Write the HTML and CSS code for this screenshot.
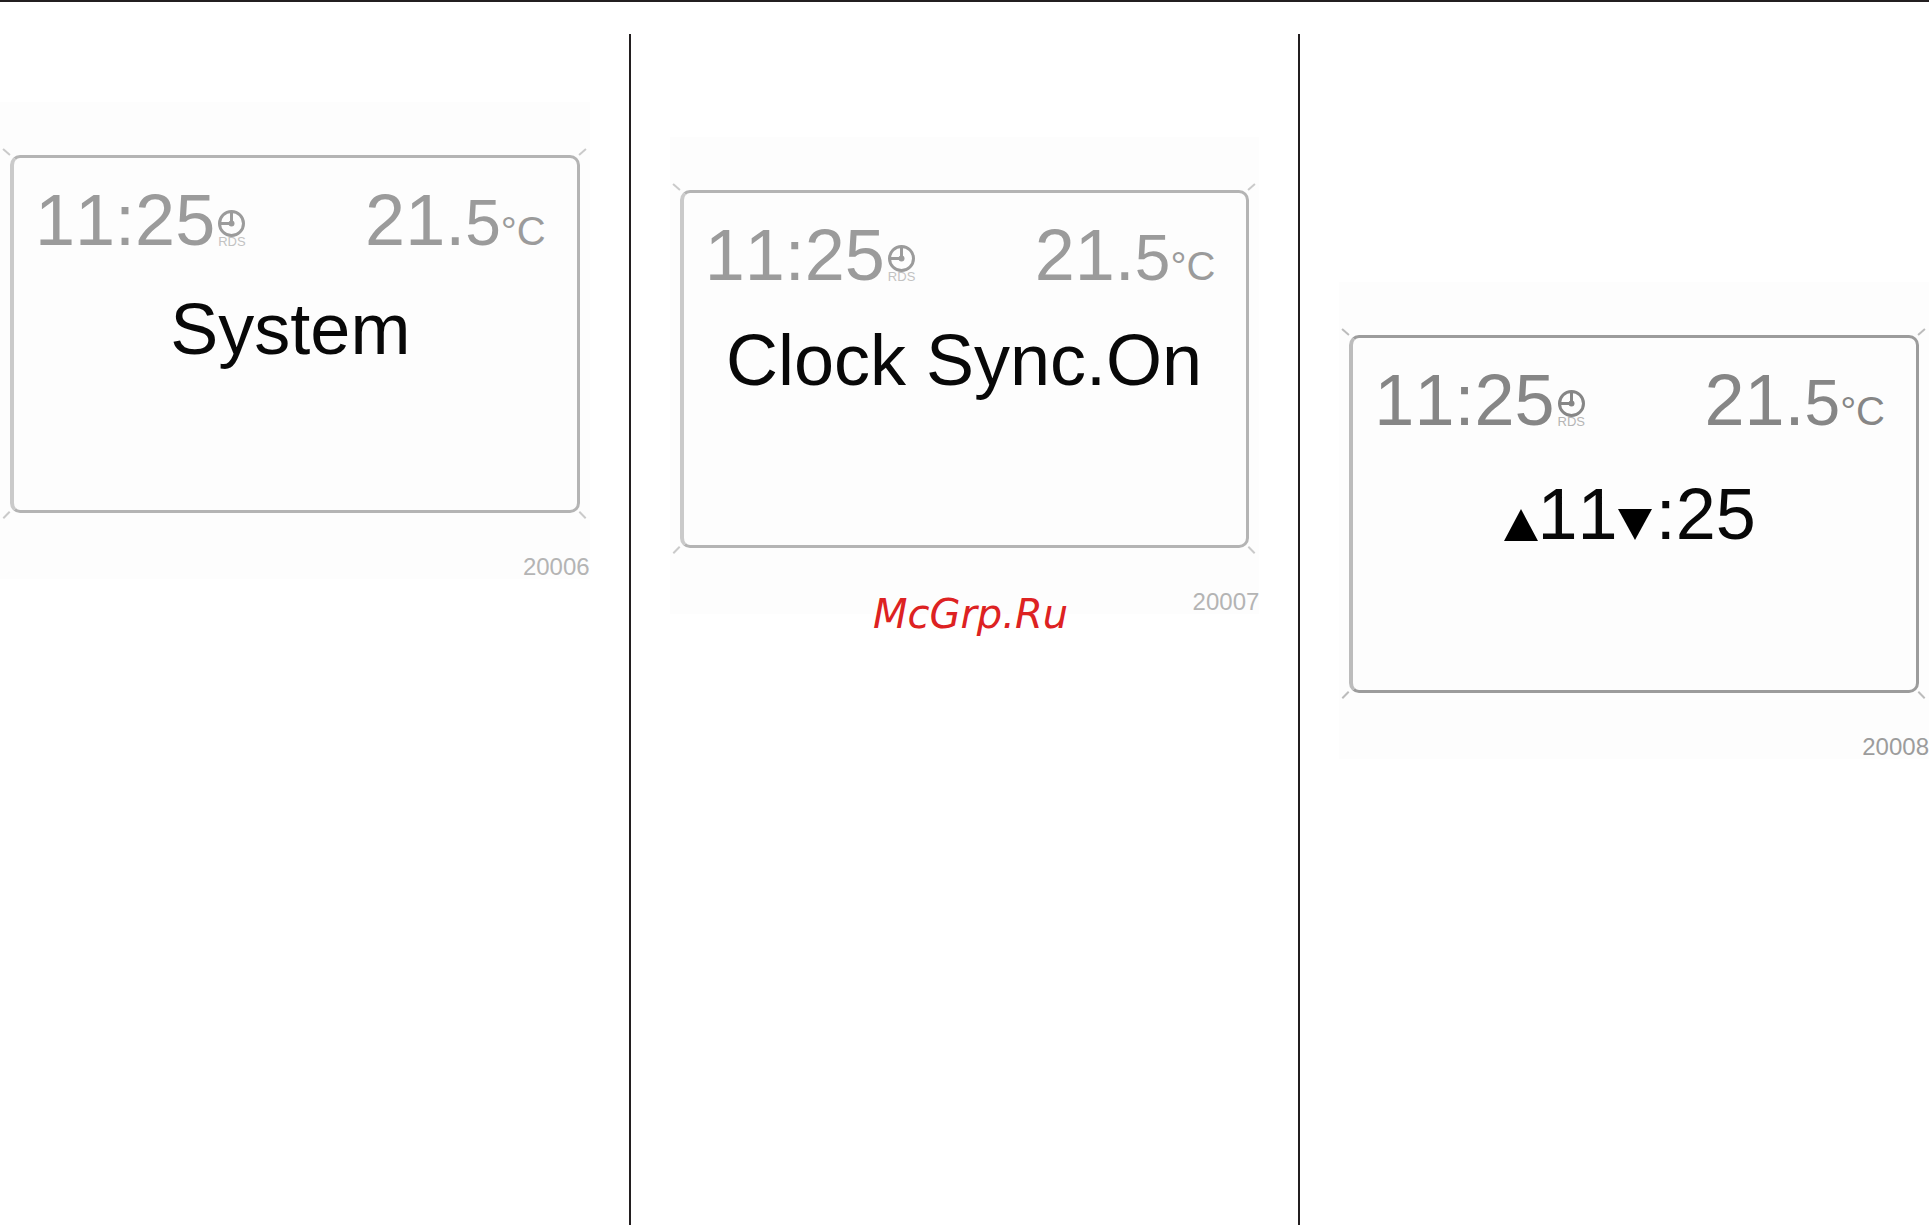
FILE: index.html
```html
<!DOCTYPE html>
<html lang="en">
<head>
    <meta charset="UTF-8">
    <meta name="viewport" content="width=device-width, initial-scale=1.0">
    <title>System - Clock Sync</title>
    <link rel="stylesheet" href="styles.css">
</head>
<body>
    <main class="page">
        <section class="column">
            <figure class="figure figure-system">
                <div class="display">
                    <span class="tick top-left"></span>
                    <span class="tick top-right"></span>
                    <span class="tick bottom-left"></span>
                    <span class="tick bottom-right"></span>
                    <div class="status">
                        <span class="time">11:25</span>
                        <span class="rds">
                            <svg class="clock" viewBox="0 0 27 27">
                                <circle cx="13.5" cy="13.5" r="12" />
                                <path d="M13.5 3v10.5H3" />
                                <circle class="hub" cx="13.5" cy="13.5" r="3" />
                            </svg>
                            <span>RDS</span>
                        </span>
                        <span class="temperature">21.<span class="decimal">5</span><span class="unit">°C</span></span>
                    </div>
                    <p class="message">System</p>
                </div>
                <figcaption>20006</figcaption>
            </figure>
        </section>

        <section class="column">
            <figure class="figure figure-sync">
                <div class="display">
                    <span class="tick top-left"></span>
                    <span class="tick top-right"></span>
                    <span class="tick bottom-left"></span>
                    <span class="tick bottom-right"></span>
                    <div class="status">
                        <span class="time">11:25</span>
                        <span class="rds">
                            <svg class="clock" viewBox="0 0 27 27">
                                <circle cx="13.5" cy="13.5" r="12" />
                                <path d="M13.5 3v10.5H3" />
                                <circle class="hub" cx="13.5" cy="13.5" r="3" />
                            </svg>
                            <span>RDS</span>
                        </span>
                        <span class="temperature">21.<span class="decimal">5</span><span class="unit">°C</span></span>
                    </div>
                    <p class="message">Clock Sync.On</p>
                </div>
                <figcaption>20007</figcaption>
                <div class="watermark">McGrp.Ru</div>
            </figure>
        </section>

        <section class="column">
            <figure class="figure figure-time">
                <div class="display">
                    <span class="tick top-left"></span>
                    <span class="tick top-right"></span>
                    <span class="tick bottom-left"></span>
                    <span class="tick bottom-right"></span>
                    <div class="status">
                        <span class="time">11:25</span>
                        <span class="rds">
                            <svg class="clock" viewBox="0 0 27 27">
                                <circle cx="13.5" cy="13.5" r="12" />
                                <path d="M13.5 3v10.5H3" />
                                <circle class="hub" cx="13.5" cy="13.5" r="3" />
                            </svg>
                            <span>RDS</span>
                        </span>
                        <span class="temperature">21.<span class="decimal">5</span><span class="unit">°C</span></span>
                    </div>
                    <p class="message">
                        <svg class="arrow" viewBox="0 0 34 32"><path d="M17 0L34 32H0z" /></svg>
                        <span>11</span>
                        <svg class="arrow" viewBox="0 0 34 32"><path d="M0 0H34L17 31z" /></svg>
                        <span class="minutes">:25</span>
                    </p>
                </div>
                <figcaption>20008</figcaption>
            </figure>
        </section>
    </main>
</body>
</html>
```

FILE: styles.css
```css
* {
    box-sizing: border-box;
}

body {
    margin: 0;
    background: #fff;
    font-family: "Liberation Sans", Arial, sans-serif;
    font-kerning: none;
}

.page {
    display: flex;
    gap: 39px;
    min-height: 100vh;
    padding-top: 32px;
    border-top: 2px solid #231f20;
}

.column {
    flex: 1 1 0;
    min-width: 0;
}

/* rule between the columns */
.column:not(:last-child) {
    box-sizing: content-box;
    padding-right: 39px;
    border-right: 2px solid #231f20;
}

.figure {
    --ink: #9b9b9b;
    --frame: #b4b4b4;
    --frame-light: #cacaca;
    position: relative;
    margin: 68px 0 0;
    padding-top: 53px;
    background: #fdfdfd;
}

.figure-sync {
    margin-top: 103px;
}

.figure-time {
    --ink: #868686;
    --frame: #9c9c9c;
    --frame-light: #bcbcbc;
    margin-top: 248px;
}

.display {
    position: relative;
    min-height: 358px;
    margin: 0 10px;
    padding: 26px 31px 26px 21px;
    border: 3px solid var(--frame);
    border-left: 4px solid var(--frame-light);
    border-radius: 10px;
}

/* short marks at the corners of the display */
.tick {
    position: absolute;
    width: 9px;
    height: 2px;
    background: var(--frame-light);
}

.top-left {
    top: -7px;
    left: -12px;
    transform: rotate(40deg);
}

.top-right {
    top: -7px;
    right: -10px;
    transform: rotate(-40deg);
}

.bottom-left {
    bottom: -6px;
    left: -12px;
    transform: rotate(-45deg);
}

.bottom-right {
    bottom: -6px;
    right: -10px;
    transform: rotate(45deg);
}

.status {
    display: flex;
    align-items: flex-end;
    color: var(--ink);
    font-size: 72px;
    line-height: 72px;
}

.rds {
    display: flex;
    flex-direction: column;
    align-items: center;
    margin: 0 0 9px 3px;
    font-size: 13px;
    line-height: 10px;
}

.rds span {
    opacity: 0.6;
}

.clock {
    width: 27px;
    height: 27px;
    fill: none;
    stroke: var(--ink);
    stroke-width: 3;
}

.clock .hub {
    fill: var(--ink);
    stroke: none;
}

.temperature {
    height: 72px;
    margin-left: auto;
}

.decimal {
    font-size: 64px;
}

.unit {
    font-size: 40px;
}

.message {
    display: flex;
    justify-content: center;
    align-items: flex-end;
    margin: 37px 0 0;
    color: #080808;
    font-size: 72px;
    line-height: 72px;
    white-space: nowrap;
}

.figure-sync .message {
    margin-top: 33px;
    padding-left: 8px;
}

.figure-time .message {
    margin-top: 42px;
}

.arrow {
    width: 34px;
    height: 32px;
    margin-bottom: 9px;
    fill: #000;
}

.minutes {
    margin-left: 4px;
}

figcaption {
    padding-top: 42px;
    color: var(--frame);
    font-size: 24px;
    line-height: 24px;
    text-align: right;
}

.watermark {
    position: absolute;
    right: 0;
    bottom: -24px;
    left: 12px;
    color: #dd2222;
    font-family: "DejaVu Sans", sans-serif;
    font-size: 40px;
    font-style: italic;
    line-height: 48px;
    text-align: center;
}
```
